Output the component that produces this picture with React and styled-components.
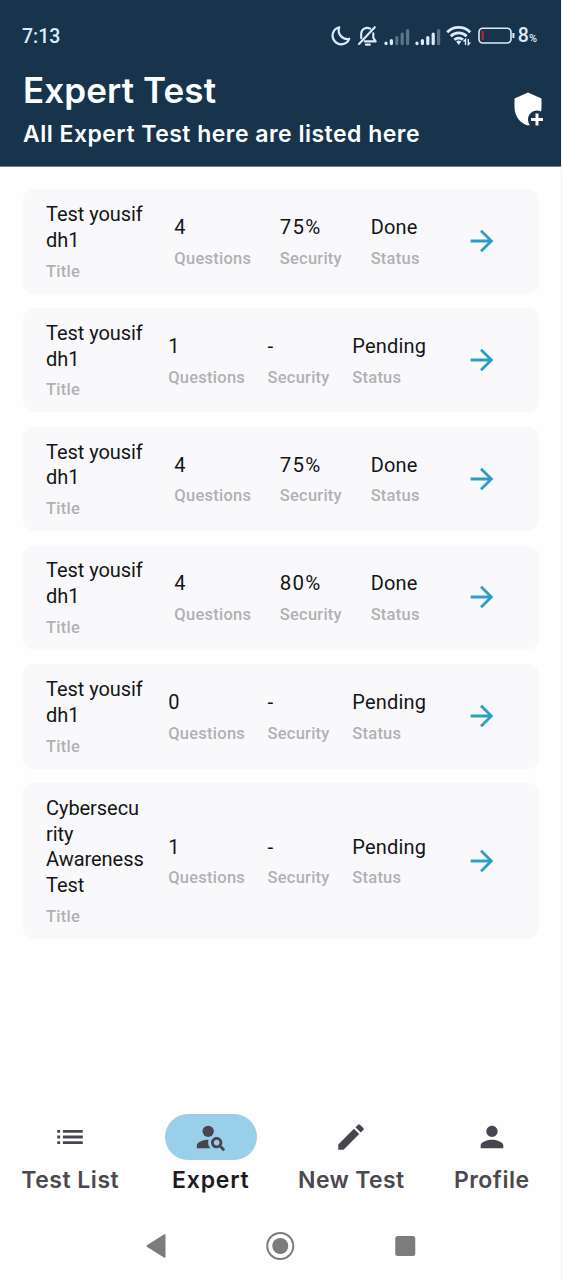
import React from "react";
import styled, { createGlobalStyle } from "styled-components";
import {
  MdAddModerator,
  MdArrowForward,
  MdEdit,
  MdList,
  MdPerson,
  MdPersonSearch,
} from "react-icons/md";

const GlobalStyle = createGlobalStyle`
  * { box-sizing: border-box; }
  body { margin: 0; background: #fefefe; }
`;

const Screen = styled.div`
  display: flex;
  flex-direction: column;
  width: 562px;
  height: 1280px;
  overflow: hidden;
  background: #fefefe;
  border-right: 1px solid #f1f1f3;
  font-family: Roboto, "Noto Sans", sans-serif;
`;

const Header = styled.header`
  height: 167px;
  flex: none;
  margin-right: -1px;
  background: #18344c;
  border-bottom: 1px solid #71818f;
  color: #fcffff;
`;

const StatusBar = styled.div`
  display: flex;
  align-items: center;
  justify-content: space-between;
  height: 72px;
  padding: 0 25px 0 22px;
  color: #dcebfa;
`;

const Clock = styled.span`
  font-size: 19.5px;
  font-weight: 500;
  letter-spacing: 0;
`;

const StatusIcons = styled.svg`
  display: block;
`;

const StatusRight = styled.div`
  display: flex;
  align-items: center;
  gap: 3px;
`;

const Battery = styled.span`
  padding-top: 3px;
  font-size: 19.5px;
  font-weight: 500;
  line-height: 24px;
  small { font-size: 11px; font-weight: 500; }
`;

const Heading = styled.div`
  display: flex;
  justify-content: space-between;
  padding: 0 16px 0 23px;
`;

const Title = styled.h1`
  margin: 0;
  font: 600 35px/37px Inter, sans-serif;
  letter-spacing: 0.1px;
  white-space: nowrap;
`;

const Subtitle = styled.p`
  margin: 10px 0 0;
  font: 600 23px/30px Inter, sans-serif;
  letter-spacing: 0.48px;
  white-space: nowrap;
`;

const AddButton = styled.button`
  display: flex;
  margin-top: 19px;
  height: 36px;
  padding: 0;
  border: 0;
  background: none;
  color: #fff;
`;

const List = styled.main`
  flex: 1;
  display: flex;
  flex-direction: column;
  gap: 14.4px;
  padding: 22.3px 22px 0 23px;
`;

const Card = styled.article`
  display: flex;
  align-items: center;
  justify-content: space-between;
  padding: 12.8px 23px 11.6px;
  border-radius: 11px;
  background: #f9f9fb;
`;

const Column = styled.div`
  width: ${(p) => p.$width}px;
  white-space: pre;
`;

const Value = styled.div`
  font-size: ${(p) => p.$size}px;
  line-height: 25.7px;
  letter-spacing: ${(p) => p.$spacing}px;
  color: #151517;
`;

const Label = styled.div`
  margin-top: 7.2px;
  margin-bottom: -0.6px;
  font-size: 16.5px;
  font-weight: 500;
  line-height: 22px;
  letter-spacing: 0.25px;
  color: #b1b1b3;
`;

const OpenButton = styled.button`
  display: flex;
  justify-content: center;
  width: 68px;
  margin-top: -2px;
  padding: 0;
  border: 0;
  background: none;
  color: #2e9dc6;
`;

const TabBar = styled.nav`
  display: flex;
  flex: none;
  height: 98px;
  margin-right: -1px;
`;

const Tab = styled.a`
  flex: 1;
  display: flex;
  flex-direction: column;
  align-items: center;
  color: ${(p) => (p.$active ? "#1d1b20" : "#4b494e")};
`;

const Pill = styled.span`
  display: flex;
  align-items: center;
  justify-content: center;
  width: 92px;
  height: 46px;
  padding-bottom: 1px;
  border-radius: 23px;
  color: #49454f;
  background: ${(p) => (p.$active ? "#99cfe8" : "transparent")};
`;

const TabLabel = styled.span`
  margin-top: 5px;
  font: 600 23px/30px Inter, sans-serif;
  letter-spacing: ${(p) => p.$spacing}px;
  white-space: nowrap;
`;

const SystemBar = styled.footer`
  display: flex;
  flex: none;
  height: 68px;
  align-items: center;
  justify-content: center;
`;

const SystemKey = styled.svg`
  flex: none;
  width: 124.5px;
  height: 32px;
`;

const tests = [
  { title: "Test yousif\ndh1", questions: 4, security: "75%", status: "Done" },
  { title: "Test yousif\ndh1", questions: 1, security: "-", status: "Pending" },
  { title: "Test yousif\ndh1", questions: 4, security: "75%", status: "Done" },
  { title: "Test yousif\ndh1", questions: 4, security: "80%", status: "Done" },
  { title: "Test yousif\ndh1", questions: 0, security: "-", status: "Pending" },
  { title: "Cybersecu\nrity\nAwareness\nTest", questions: 1, security: "-", status: "Pending" },
];

const tabs = [
  { label: "Test List", Icon: MdList, spacing: 0.5 },
  { label: "Expert", Icon: MdPersonSearch, spacing: 0.8, active: true },
  { label: "New Test", Icon: MdEdit, spacing: 0.35 },
  { label: "Profile", Icon: MdPerson, spacing: 0.5 },
];

function Field({ width, value, label, size = 20, spacing = 0.2 }) {
  return (
    <Column $width={width}>
      <Value $size={size} $spacing={spacing}>{value}</Value>
      <Label>{label}</Label>
    </Column>
  );
}

function Signal({ x, lit }) {
  return [0, 1, 2, 3, 4].map((i) => (
    <path
      key={i}
      d={`M${x + i * 5.4} 19.6v${-[0.5, 3, 6, 9.5, 13][i]}`}
      stroke="currentColor"
      strokeWidth="3.2"
      strokeLinecap="round"
      opacity={i < lit ? 1 : 0.35}
    />
  ));
}

function StatusGlyphs() {
  return (
    <StatusIcons width="184" height="24" viewBox="0 0 184 24" fill="none">
      <path
        d="M8.2 3.3A8.6 8.6 0 1 0 18.2 14.8A8.7 8.7 0 0 1 8.2 3.3Z"
        stroke="currentColor" strokeWidth="2.2" strokeLinejoin="round"
      />
      <g stroke="currentColor" strokeWidth="2.1" strokeLinecap="round" strokeLinejoin="round">
        <path d="M43.8 3.2L28 20" />
        <path d="M30.2 14.3V9.8a6 6 0 0 1 9-5.1M42.3 9.3v4.5l2.4 3.6H33.8" />
        <path d="M34.8 20.6h4" />
      </g>
      <Signal x={55} lit={2} />
      <Signal x={86} lit={4} />
      <g stroke="currentColor" strokeWidth="2.8">
        <path d="M116.2 8.3a16 16 0 0 1 23 0" />
        <path d="M119.8 12.2a11 11 0 0 1 15.8 0" />
        <path d="M123.4 15.8a6.2 6.2 0 0 1 8.6 0" />
      </g>
      <path d="M125.2 17.4a4 4 0 0 1 5 0L127.7 21Z" fill="currentColor" />
      <path d="M134.5 21v-5.5l-2 2M137.3 15v5.5l2-2" stroke="currentColor" strokeWidth="1.4" />
      <rect x="148" y="4.2" width="32" height="14.8" rx="3.8" stroke="currentColor" strokeWidth="1.6" />
      <path d="M151.7 7v9" stroke="#b5242f" strokeWidth="2.2" />
      <path d="M182.4 9v5" stroke="currentColor" strokeWidth="2" />
    </StatusIcons>
  );
}

export default function App() {
  return (
    <Screen>
      <GlobalStyle />
      <Header>
        <StatusBar>
          <Clock>7:13</Clock>
          <StatusRight>
            <StatusGlyphs />
            <Battery>8<small>%</small></Battery>
          </StatusRight>
        </StatusBar>
        <Heading>
          <div>
            <Title>Expert Test</Title>
            <Subtitle>All Expert Test here are listed here</Subtitle>
          </div>
          <AddButton aria-label="Add test"><MdAddModerator size={36} /></AddButton>
        </Heading>
      </Header>
      <List>
        {tests.map((t, i) => (
          <Card key={i}>
            <Field width={100} value={t.title} label="Title" spacing={-0.05} />
            <Field width={77} value={t.questions} label="Questions" />
            <Field width={62.6} value={t.security} label="Security" size={20.5} spacing={1.2} />
            <Field width={t.status === "Done" ? 49 : 73.5} value={t.status} label="Status" />
            <OpenButton aria-label="Open"><MdArrowForward size={34} /></OpenButton>
          </Card>
        ))}
      </List>
      <TabBar>
        {tabs.map(({ label, Icon, active, spacing }) => (
          <Tab key={label} $active={active}>
            <Pill $active={active}><Icon size={34} /></Pill>
            <TabLabel $spacing={spacing}>{label}</TabLabel>
          </Tab>
        ))}
      </TabBar>
      <SystemBar>
        <SystemKey viewBox="-62.25 -16 124.5 32" fill="#7c7c7c">
          <path d="M-9 0L8.5 -11V11Z" stroke="#7c7c7c" strokeWidth="1.5" strokeLinejoin="round" />
        </SystemKey>
        <SystemKey viewBox="-62.25 -16 124.5 32" fill="#7c7c7c">
          <circle r="8" />
          <circle r="13" fill="none" stroke="#7c7c7c" strokeWidth="2" />
        </SystemKey>
        <SystemKey viewBox="-62.25 -16 124.5 32" fill="#7c7c7c">
          <rect x="-10" y="-10" width="20" height="20" rx="2.5" />
        </SystemKey>
      </SystemBar>
    </Screen>
  );
}
